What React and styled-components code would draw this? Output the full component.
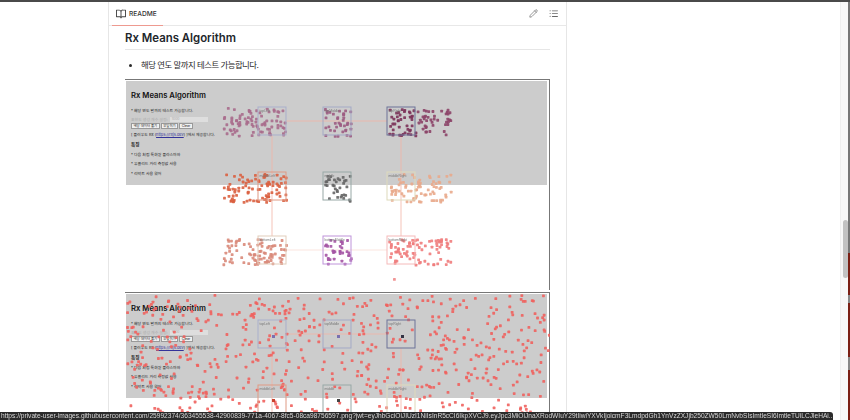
import styled, { createGlobalStyle } from "styled-components";
import { Pencil } from "lucide-react";

const STATUS_URL =
    "https://private-user-images.githubusercontent.com/25992374/363455538-42900839-771a-4067-8fc5-08ca98756597.png?jwt=eyJhbGciOiJIUzI1NiIsInR5cCI6IkpXVCJ9.eyJpc3MiOiJnaXRodWIuY29tIiwiYXVkIjoicmF3LmdpdGh1YnVzZXJjb250ZW50LmNvbSIsImtleSI6ImtleTUiLCJleHAi...";

const FIGURE_WIDTH = 425;
const FIGURE_HEIGHT = 211;

// small seeded random, so the dots stay put between runs
function makeRandom(seed) {
    let s = seed * 2654435;
    return () => {
        s = (s + 0x6d2b79f5) | 0;
        let t = Math.imul(s ^ (s >>> 15), 1 | s);
        t = (t + Math.imul(t ^ (t >>> 7), 61 | t)) ^ t;
        return ((t ^ (t >>> 14)) >>> 0) / 4294967296;
    };
}

function scatter(seed, count, x, y, w, h, color) {
    const rand = makeRandom(seed);
    const dots = [];
    for (let i = 0; i < count; i++) {
        dots.push({ x: x + rand() * w, y: y + rand() * h, color });
    }
    return dots;
}

// positions are relative to the figure's top left corner
const COLS = [133, 198, 262];
const ROWS = [27, 92, 156];

const clusteredNodes = [
    { col: 0, row: 0, color: "#a9afcb", label: "topLeft" },
    { col: 1, row: 0, color: "#a3a9c6", label: "topMiddle" },
    { col: 2, row: 0, color: "#6c7398", label: "topRight" },
    { col: 0, row: 1, color: "#df9a84", label: "middleLeft" },
    { col: 1, row: 1, color: "#97a8a6", label: "middle" },
    { col: 2, row: 1, color: "#dedabb", label: "middleRight" },
    { col: 0, row: 2, color: "#e2cdbb", label: "bottomLeft" },
    { col: 1, row: 2, color: "#bf94da", label: "bottomMiddle" },
    { col: 2, row: 2, color: "#f5baba", label: "bottomRight" },
];

// the third row of the second figure is below the fold
const spreadNodes = clusteredNodes.filter((n) => n.row < 2);

const clusteredDots = [
    ...scatter(11, 85, 96, 27, 64, 29, "#a96b8c"),
    ...scatter(12, 38, 199, 28, 26, 27, "#9c5c82"),
    ...scatter(13, 42, 263, 28, 27, 27, "#7c3259"),
    ...scatter(14, 42, 291, 27, 34, 27, "#8c4468"),
    ...scatter(21, 90, 97, 93, 64, 28, "#da6040"),
    ...scatter(22, 34, 199, 94, 26, 26, "#666666"),
    ...scatter(23, 75, 263, 93, 62, 28, "#e9aa8c"),
    ...scatter(31, 85, 97, 158, 64, 26, "#d98a7a"),
    ...scatter(32, 34, 199, 158, 26, 26, "#a454a4"),
    ...scatter(33, 80, 263, 158, 62, 26, "#f07c7c"),
    { x: 268, y: 198, color: "#f08a8a" },
];

const spreadDots = scatter(51, 640, 1, 1, 422, 130, "#f0625e");

const spreadCenters = [
    { x: 147, y: 42, color: "#7a70b0" },
    { x: 212, y: 42, color: "#7a70b0" },
    { x: 276, y: 42, color: "#333344" },
    { x: 147, y: 106, color: "#c8402c" },
    { x: 212, y: 106, color: "#444444" },
];

function Diagram({ nodes, dots, centers = [] }) {
    const size = 28;
    const mid = size / 2;
    return (
        <Overlay viewBox={`0 0 ${FIGURE_WIDTH} ${FIGURE_HEIGHT}`}>
            <g stroke="#f2b4a6" strokeWidth="0.8" fill="none">
                <path d={`M${COLS[0] + size} ${ROWS[0] + mid}H${COLS[2]}`} />
                <path d={`M${COLS[0] + mid} ${ROWS[0] + size}V${ROWS[2]}`} />
                <path d={`M${COLS[2] + mid} ${ROWS[0] + size}V${ROWS[2]}`} />
                <path d={`M${COLS[0] + size} ${ROWS[2] + mid}H${COLS[2]}`} opacity="0.45" />
            </g>
            {dots.map((d, i) => (
                <rect key={i} x={d.x} y={d.y} width="2.8" height="2.8" rx="0.6" fill={d.color} opacity="0.9" />
            ))}
            {nodes.map((n) => (
                <g key={n.label}>
                    <rect
                        x={COLS[n.col]}
                        y={ROWS[n.row]}
                        width={size}
                        height={size}
                        fill="none"
                        stroke={n.color}
                        strokeWidth="1"
                    />
                    <NodeLabel x={COLS[n.col] + 1.5} y={ROWS[n.row] + 4.5}>
                        {n.label}
                    </NodeLabel>
                </g>
            ))}
            {centers.map((c, i) => (
                <rect key={i} x={c.x} y={c.y} width="3" height="3" fill={c.color} />
            ))}
        </Overlay>
    );
}

function MiniReadme() {
    return (
        <Panel>
            <MiniTitle>Rx Means Algorithm</MiniTitle>
            <MiniLine>* 해당 연도 말까지 테스트 가능합니다.</MiniLine>
            <MiniForm>
                <MiniLabel>표현도 생성 개수 설정:</MiniLabel>
                <MiniInput>1000</MiniInput>
            </MiniForm>
            <MiniButtons>
                <MiniButton>해당 데이터 풀기</MiniButton>
                <MiniButton>부딪히기</MiniButton>
                <MiniButton>Clear</MiniButton>
            </MiniButtons>
            <MiniLine>
                [ 플러우도 Rx (<MiniLink>https://rxjs.dev</MiniLink>) ]에서 제공합니다.
            </MiniLine>
            <MiniHeading>특징</MiniHeading>
            <MiniLine>* 다음 처럼 특화길 플라스마와</MiniLine>
            <MiniLine>* 유클리드 거리 측정값 사용</MiniLine>
            <MiniLine>* 리덕트 사용 왔어</MiniLine>
        </Panel>
    );
}

function App() {
    return (
        <>
            <GlobalStyle />
            <Screen>
                <Main>
                    <Card>
                        <CardHeader>
                            <Tab>
                                <svg width="10" height="10" viewBox="0 0 16 16" fill="#444">
                                    <path d="M0 1.75A.75.75 0 0 1 .75 1h4.25c1.2 0 2.3.57 3 1.46A3.75 3.75 0 0 1 11 1h4.25a.75.75 0 0 1 .75.75v10.5a.75.75 0 0 1-.75.75h-5.02c-.82 0-1.48.66-1.48 1.25a.75.75 0 0 1-1.5 0c0-.59-.66-1.25-1.48-1.25H.75a.75.75 0 0 1-.75-.75Zm7.25 2.99A2.25 2.25 0 0 0 5 2.5H1.5v9h4.27c.53 0 1.03.12 1.48.34Zm1.5 7.09a3.3 3.3 0 0 1 1.48-.34h4.27v-9H11a2.25 2.25 0 0 0-2.25 2.25Z" />
                                </svg>
                                README
                            </Tab>
                            <HeaderIcons>
                                <Pencil size={9} color="#555" strokeWidth={1.6} />
                                <svg width="9" height="9" viewBox="0 0 16 16" fill="#666">
                                    <path d="M5.75 2.5h9.5a.75.75 0 0 1 0 1.5h-9.5a.75.75 0 0 1 0-1.5Zm0 5h9.5a.75.75 0 0 1 0 1.5h-9.5a.75.75 0 0 1 0-1.5Zm0 5h9.5a.75.75 0 0 1 0 1.5h-9.5a.75.75 0 0 1 0-1.5ZM2 4a1 1 0 1 1 0-2 1 1 0 0 1 0 2Zm0 5a1 1 0 1 1 0-2 1 1 0 0 1 0 2Zm0 5a1 1 0 1 1 0-2 1 1 0 0 1 0 2Z" />
                                </svg>
                            </HeaderIcons>
                        </CardHeader>
                        <Article>
                            <Title>Rx Means Algorithm</Title>
                            <BulletList>
                                <li>해당 연도 말까지 테스트 가능합니다.</li>
                            </BulletList>
                            <Figure>
                                <MiniReadme />
                                <Diagram nodes={clusteredNodes} dots={clusteredDots} />
                            </Figure>
                            <Figure>
                                <MiniReadme />
                                <Diagram nodes={spreadNodes} dots={spreadDots} centers={spreadCenters} />
                            </Figure>
                        </Article>
                    </Card>
                </Main>
                <ScrollTrack>
                    <ScrollThumb />
                </ScrollTrack>
                <EdgeStrip />
                <StatusBar>{STATUS_URL}</StatusBar>
            </Screen>
        </>
    );
}

const GlobalStyle = createGlobalStyle`
    html, body {
        margin: 0;
        height: 100%;
        overflow: hidden;
        background: #fff;
    }
    body {
        font-family: Inter, "Noto Sans CJK KR", sans-serif;
        color: #1f2328;
    }
`;

const Screen = styled.div`
    position: relative;
    height: 420px;
    display: flex;
    overflow: hidden;
    box-sizing: border-box;
    border-top: 2px solid #4a4a4a;
    background: #fff;
`;

const Main = styled.main`
    flex: 1;
    padding-left: 108px;
`;

const Card = styled.section`
    width: 459px;
    box-sizing: border-box;
    border-left: 1px solid #e6e6e6;
    border-right: 1px solid #e6e6e6;
    height: 100%;
`;

const CardHeader = styled.header`
    height: 24px;
    box-sizing: border-box;
    display: flex;
    justify-content: space-between;
    align-items: stretch;
    padding: 0 8px 0 3px;
    border-bottom: 1px solid #e8e8e8;
`;

const Tab = styled.div`
    display: flex;
    align-items: center;
    gap: 3px;
    width: 51px;
    box-sizing: border-box;
    padding-left: 4px;
    font-size: 6.6px;
    font-weight: 500;
    color: #333;
    border-bottom: 1px solid #ee9a90;
    margin-bottom: -1px;
`;

const HeaderIcons = styled.div`
    display: flex;
    align-items: center;
    gap: 11px;
`;

const Article = styled.article`
    padding: 3px 16px 0;
`;

const Title = styled.h2`
    margin: 0;
    height: 20px;
    font-size: 11.4px;
    line-height: 18px;
    font-weight: 600;
    color: #22262b;
    border-bottom: 1px solid #e6e6e6;
`;

const BulletList = styled.ul`
    margin: 9px 0 8px;
    padding-left: 16px;
    font-size: 8.4px;
    line-height: 12px;
    letter-spacing: -0.5px;
    color: #2a2a2a;
`;

const Figure = styled.figure`
    position: relative;
    margin: 0 0 2px;
    width: ${FIGURE_WIDTH}px;
    height: ${FIGURE_HEIGHT}px;
    box-sizing: border-box;
    border-top: 1px solid #777;
    border-right: 1px solid #777;
    padding: 1px 2px 0 1px;
    filter: blur(0.5px);
`;

const Panel = styled.div`
    height: 104px;
    box-sizing: border-box;
    background: #cccccc;
    padding: 9px 5px 0;
`;

const Overlay = styled.svg`
    position: absolute;
    left: 0;
    top: 0;
    width: ${FIGURE_WIDTH}px;
    height: ${FIGURE_HEIGHT}px;
`;

const NodeLabel = styled.text`
    font-family: "Liberation Sans", sans-serif;
    font-size: 3.4px;
    fill: #777;
`;

const MiniTitle = styled.div`
    font-size: 7.7px;
    line-height: 11px;
    font-weight: 600;
    color: #111;
    margin-bottom: 5px;
`;

const MiniLine = styled.div`
    font-size: 3.9px;
    line-height: 9.4px;
    color: #222;
`;

const MiniForm = styled.div`
    display: flex;
    align-items: center;
    gap: 2px;
    height: 6px;
    margin-top: 1px;
`;

const MiniLabel = styled.span`
    font-size: 3.9px;
    color: #aaa;
`;

const MiniInput = styled.span`
    width: 36px;
    height: 5px;
    background: #dedede;
    font-size: 3.4px;
    line-height: 5px;
    color: #aaa;
    padding-left: 2px;
`;

const MiniButtons = styled.div`
    display: flex;
    gap: 1px;
    margin: 1px 0 1px;
`;

const MiniButton = styled.span`
    background: #f0f0f0;
    border: 1px solid #999;
    font-size: 3.4px;
    line-height: 4px;
    padding: 0 1.5px;
    color: #222;
`;

const MiniLink = styled.span`
    color: #33339a;
    text-decoration: underline;
`;

const MiniHeading = styled.div`
    font-size: 4.6px;
    font-weight: 700;
    line-height: 10px;
    color: #222;
`;

const ScrollTrack = styled.div`
    width: 8px;
    padding: 218px 1px 0 2px;
    box-sizing: border-box;
    background: #f8f8f8;
    border-left: 1px solid #efefef;
`;

const ScrollThumb = styled.div`
    width: 5px;
    height: 58px;
    border-radius: 3px;
    background: #c2c2c2;
`;

const EdgeStrip = styled.div`
    width: 2px;
    background: linear-gradient(#777 0 60%, #7a1f14 60% 70%, #888 70% 72%, #7a1f14 72% 85%, #888 85% 88%, #7a1f14 88%);
`;

const StatusBar = styled.div`
    position: absolute;
    left: 0;
    bottom: 0;
    width: 833px;
    height: 8px;
    box-sizing: border-box;
    padding-left: 1px;
    background: #2b2b2b;
    border-top-right-radius: 3px;
    color: #d8d8d8;
    font-family: "Liberation Sans", sans-serif;
    font-size: 6.6px;
    line-height: 8px;
    white-space: nowrap;
    overflow: hidden;
`;

export default App;
